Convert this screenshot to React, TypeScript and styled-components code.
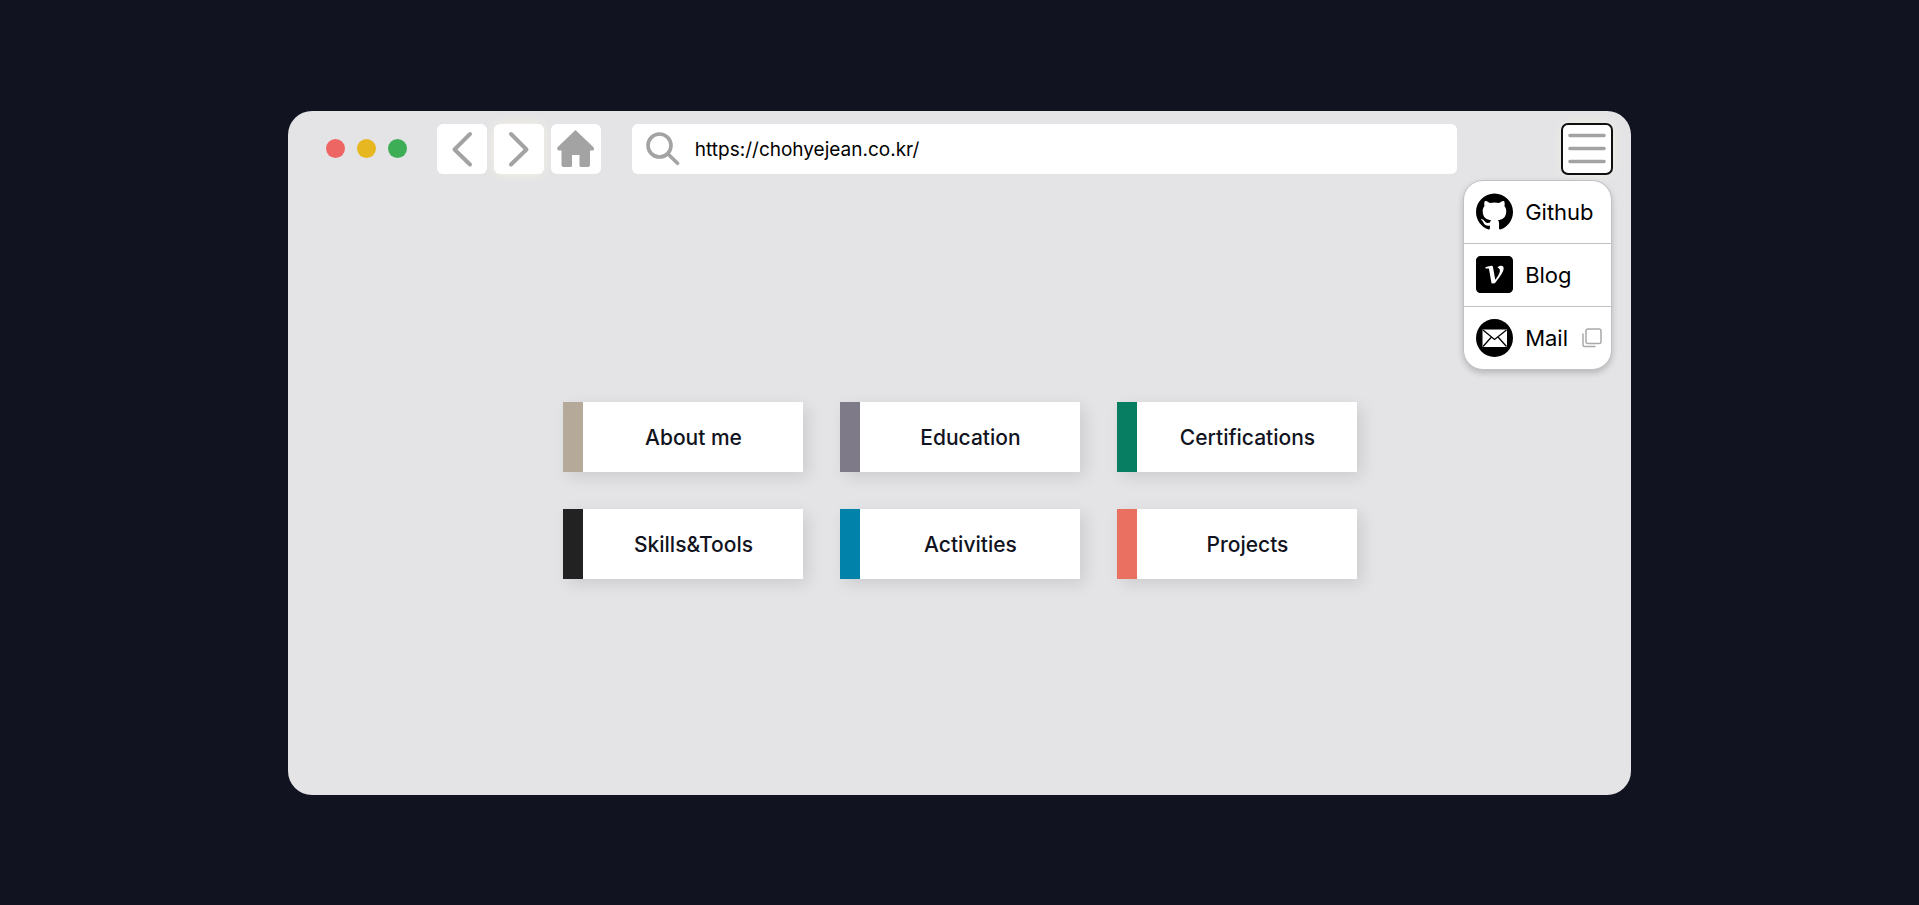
import React from "react";
import styled, { createGlobalStyle } from "styled-components";
import { SiVelog, SiGithub } from "react-icons/si";

const GlobalStyle = createGlobalStyle`
  *, *::before, *::after { box-sizing: border-box; }
  body {
    margin: 0;
    background: #111321;
    color: #000;
    font-family: Inter, "Noto Sans CJK KR", sans-serif;
  }
`;

const Page = styled.div`
  display: flex;
  min-height: 100vh;
  align-items: center;
  justify-content: center;
`;

const BrowserWindow = styled.main`
  display: flex;
  flex-direction: column;
  width: 70%;
  min-height: 684px;
  border-radius: 24px;
  background: #e4e4e6;
`;

const Toolbar = styled.header`
  display: flex;
  align-items: center;
  padding: 13px 19px 0 38px;
`;

const Lights = styled.div`
  display: flex;
  gap: 12px;
  margin-right: 30px;
`;

const Light = styled.span<{ $color: string }>`
  width: 19px;
  height: 19px;
  border-radius: 50%;
  background: ${(p) => p.$color};
`;

const NavGroup = styled.nav`
  display: flex;
  gap: 7px;
  margin-right: 31px;
`;

const ToolButton = styled.button<{ $glow?: boolean; $active?: boolean }>`
  display: grid;
  place-items: center;
  width: 50px;
  height: 50px;
  padding: 0;
  border: 0;
  border-radius: 6px;
  background: #fff;
  color: #a3a3a3;
  cursor: pointer;
  box-shadow: ${(p) => (p.$glow || p.$active ? "0 0 10px #f3f1e4" : "none")};
  outline: ${(p) => (p.$active ? "2px solid #101010" : "none")};
  outline-offset: -1px;
`;

const AddressBar = styled.label`
  display: flex;
  flex: 1;
  align-items: center;
  gap: 15px;
  height: 50px;
  padding: 0 14px;
  border-radius: 6px;
  background: #fff;
`;

const AddressInput = styled.input`
  flex: 1;
  min-width: 0;
  padding: 2px 0 0;
  border: 0;
  outline: 0;
  background: transparent;
  color: #000;
  font: 400 19px/24px Inter, sans-serif;
`;

const MenuAnchor = styled.div`
  position: relative;
  margin-left: 105px;
`;

const Menu = styled.ul`
  position: absolute;
  top: 56px;
  right: 0;
  width: 149px;
  margin: 0;
  padding: 0;
  list-style: none;
  border: 1px solid #c1c1c3;
  border-radius: 20px;
  background: #fff;
  box-shadow: 0 3px 6px rgba(0, 0, 0, 0.2);
`;

const MenuItem = styled.li`
  display: flex;
  align-items: center;
  height: 62px;
  padding-left: 12px;

  & + & {
    height: 63px;
    border-top: 1px solid #c1c1c3;
  }
`;

const MenuLink = styled.a`
  display: flex;
  align-items: center;
  gap: 12px;
  color: #000;
  font-size: 22px;
  line-height: 28px;
  text-decoration: none;
`;

const CopyButton = styled.button`
  display: grid;
  margin-left: 14px;
  padding: 0;
  border: 0;
  background: transparent;
  color: #a9a9a9;
  cursor: pointer;
`;

const Content = styled.section`
  display: flex;
  flex: 1;
  align-items: center;
  justify-content: center;
  padding: 12px 0 0 2px;
`;

const CardGrid = styled.div`
  display: grid;
  grid-template-columns: repeat(3, 240px);
  gap: 37px;
`;

const Card = styled.button<{ $accent: string }>`
  height: 70px;
  padding: 2px 0 0;
  border: 0;
  border-left: 20px solid ${(p) => p.$accent};
  background: #fff;
  color: #111321;
  font: 500 21px/28px Inter, sans-serif;
  box-shadow: 5px 5px 15px rgba(0, 0, 0, 0.1);
  cursor: pointer;
`;

const cards = [
  { label: "About me", accent: "#b5a999" },
  { label: "Education", accent: "#7e7a88" },
  { label: "Certifications", accent: "#077e61" },
  { label: "Skills&Tools", accent: "#222222" },
  { label: "Activities", accent: "#0082aa" },
  { label: "Projects", accent: "#ea7162" },
];

const ChevronLeft = () => (
  <svg width="50" height="50" fill="none" stroke="currentColor" strokeWidth="4" strokeLinecap="round" strokeLinejoin="round" aria-hidden="true">
    <path d="M33 10 17.500 25.500 33 40.500" />
  </svg>
);

const ChevronRight = () => (
  <svg width="50" height="50" fill="none" stroke="currentColor" strokeWidth="4" strokeLinecap="round" strokeLinejoin="round" aria-hidden="true">
    <path d="M17 10 32.500 25.500 17 40.500" />
  </svg>
);

const HomeIcon = () => (
  <svg width="50" height="50" fill="currentColor" aria-hidden="true">
    <path d="M24.500 6 42.500 23.200Q44 26 41.500 26.500H39V41Q39 43 37 43H30Q28.500 43 28.500 41.500V31H21V41.500Q21 43 19.500 43H12.500Q10.500 43 10.500 41V26.500H8Q5.500 26 6.500 23.200Z" />
  </svg>
);

const SearchIcon = () => (
  <svg width="34" height="34" fill="none" stroke="currentColor" strokeWidth="3.600" strokeLinecap="round" color="#a3a3a3" aria-hidden="true">
    <circle cx="13.500" cy="13.500" r="11.500" />
    <path d="m22 22 9.500 9.300" />
  </svg>
);

const MenuIcon = () => (
  <svg width="50" height="50" stroke="currentColor" strokeWidth="3.600" strokeLinecap="round" aria-hidden="true">
    <path d="M8 11.500H42M8 24.500H42M8 37.500H42" />
  </svg>
);

const MailIcon = () => (
  <svg width="37" height="38" viewBox="0 0 37 38" aria-hidden="true">
    <ellipse cx="18.500" cy="19" rx="18.500" ry="19" />
    <rect x="6.500" y="10.500" width="24.500" height="17.500" fill="#fff" />
    <path d="m7 11 11.500 9.500L30.500 11M7 27.500l8.500-9.500M30.500 27.500 22 18" fill="none" stroke="#000" strokeWidth="1.300" />
  </svg>
);

const CopyIcon = () => (
  <svg width="20" height="20" fill="none" stroke="currentColor" strokeWidth="1.500" strokeLinecap="round" aria-hidden="true">
    <rect x="4" y="1" width="15" height="14.500" rx="2" />
    <path d="M1 6v11q0 1.500 1.500 1.500H13" />
  </svg>
);

export default function App() {
  return (
    <Page>
      <GlobalStyle />
      <BrowserWindow>
        <Toolbar>
          <Lights>
            <Light $color="#ed6664" />
            <Light $color="#e6b720" />
            <Light $color="#3dae56" />
          </Lights>
          <NavGroup aria-label="History">
            <ToolButton aria-label="Back"><ChevronLeft /></ToolButton>
            <ToolButton $glow aria-label="Forward"><ChevronRight /></ToolButton>
            <ToolButton aria-label="Home"><HomeIcon /></ToolButton>
          </NavGroup>
          <AddressBar>
            <SearchIcon />
            <AddressInput aria-label="Address" defaultValue="https://chohyejean.co.kr/" />
          </AddressBar>
          <MenuAnchor>
            <ToolButton $active aria-label="Menu" aria-expanded="true"><MenuIcon /></ToolButton>
            <Menu>
              <MenuItem><MenuLink href="#github"><SiGithub size={37} />Github</MenuLink></MenuItem>
              <MenuItem><MenuLink href="#blog"><SiVelog size={37} />Blog</MenuLink></MenuItem>
              <MenuItem>
                <MenuLink href="#mail"><MailIcon />Mail</MenuLink>
                <CopyButton aria-label="Copy mail address"><CopyIcon /></CopyButton>
              </MenuItem>
            </Menu>
          </MenuAnchor>
        </Toolbar>
        <Content>
          <CardGrid>
            {cards.map((card) => (
              <Card key={card.label} $accent={card.accent}>{card.label}</Card>
            ))}
          </CardGrid>
        </Content>
      </BrowserWindow>
    </Page>
  );
}
